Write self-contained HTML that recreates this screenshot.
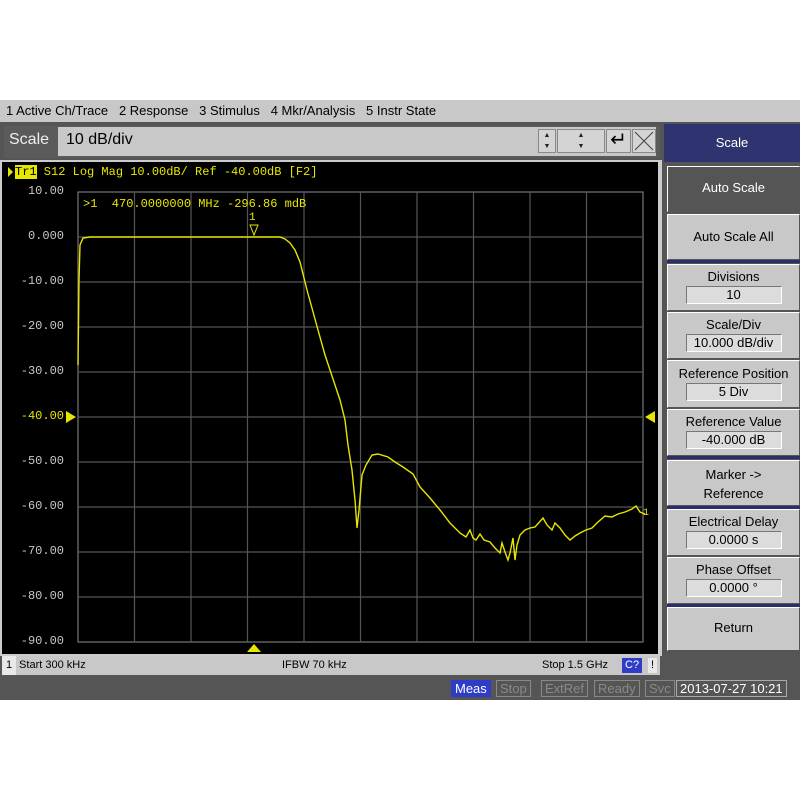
<!DOCTYPE html>
<html><head><style>
*{margin:0;padding:0;box-sizing:border-box}
body{width:800px;height:800px;background:#fff;position:relative;overflow:hidden;font-family:"Liberation Sans",sans-serif;font-size:12px}
.a{position:absolute}
.btn{position:absolute;left:667px;width:133px;background:#c8c8c8;border:1px solid #fff;border-right-color:#555;border-bottom-color:#555;color:#000;text-align:center;font-size:13px}
.val{display:block;margin:2px auto 0;width:96px;height:18px;background:#dcdcdc;border:1px solid #777;border-right-color:#fff;border-bottom-color:#fff;line-height:16px}
.sep{position:absolute;left:667px;width:133px;height:3px;background:#2a2f6a}
.lbl{position:absolute;left:0;width:64px;text-align:right;color:#c8c8c8;font-family:"Liberation Mono",monospace;font-size:12px}
.st{position:absolute;top:680px;height:17px;line-height:16px;font-size:13px;color:#8a8a8a;border:1px solid #888;padding:0 3px}
.ar{position:absolute;font-size:7px;line-height:8px;color:#222;text-align:center;width:100%}
</style></head><body>
<div class="a" style="top:100px;left:0;width:800px;height:22px;background:#c8c8c8;line-height:22px;font-size:13px;padding-left:6px">1 Active Ch/Trace&nbsp;&nbsp; 2 Response&nbsp;&nbsp; 3 Stimulus&nbsp;&nbsp; 4 Mkr/Analysis&nbsp;&nbsp; 5 Instr State</div>
<div class="a" style="top:122px;left:0;width:800px;height:578px;background:#555"></div>
<div class="a" style="top:126px;left:4px;width:656px;height:32px;background:#5a5a5a"></div>
<div class="a" style="top:131px;left:9px;font-size:16px;color:#eee">Scale</div>
<div class="a" style="top:127px;left:58px;width:598px;height:29px;background:#c8c8c8;font-size:16px;padding:4px 8px;color:#000">10 dB/div</div>
<div class="a" style="top:129px;left:538px;width:18px;height:24px;background:#d4d4d4;border:1px solid #888"><span class="ar" style="top:2px">▲</span><span class="ar" style="top:13px">▼</span></div>
<div class="a" style="top:129px;left:557px;width:48px;height:24px;background:#d4d4d4;border:1px solid #888"><span class="ar" style="top:2px">▲</span><span class="ar" style="top:13px">▼</span></div>
<div class="a" style="top:129px;left:606px;width:25px;height:24px;background:#d4d4d4;border:1px solid #888;font-size:20px;line-height:20px;text-align:center">↵</div>
<div class="a" style="top:129px;left:632px;width:24px;height:24px;background:#d4d4d4;border:1px solid #888">
<svg width="22" height="22"><path d="M2 2L20 20M20 2L2 20" stroke="#444" stroke-width="1"/></svg></div>
<div class="a" style="top:124px;left:664px;width:136px;height:38px;background:#2f3370;color:#fff;text-align:center;line-height:38px;font-size:13px">Scale</div>
<div class="a" style="top:160px;left:0;width:662px;height:496px;background:#000;border:2px solid #ccc;border-right-width:4px"></div>
<svg class="a" style="top:0;left:0" width="800" height="800">
<g stroke="#555" stroke-width="1.2" fill="none">
<rect x="78" y="192" width="565" height="450" stroke="#777"/>
<path d="M134.5 192V642M191 192V642M247.5 192V642M304 192V642M360.5 192V642M417 192V642M473.5 192V642M530 192V642M586.5 192V642"/>
<path d="M78 237H643M78 282H643M78 327H643M78 372H643M78 417H643M78 462H643M78 507H643M78 552H643M78 597H643"/>
</g>
<polyline fill="none" stroke="#e6e600" stroke-width="1.4" points="78,365 79,280 80,245 83,238 90,237 280,237 285,239 290,243 295,250 300,262 307,290 318,330 325,355 330,370 340,400 345,420 348,445 352,470 355,500 357,528 359,510 362,475 366,465 372,455 378,454 388,457 395,462 403,467 413,474 420,487 430,498 440,510 450,523 460,533 466,537 470,530 473,538 476,540 480,534 484,540 490,542 495,548 500,553 502,543 505,552 508,560 510,553 513,538 515,560 517,545 520,535 525,530 530,528 535,527 543,518 547,525 552,530 555,523 560,528 565,535 570,540 575,536 580,533 586,530 592,528 598,522 605,516 612,517 618,514 625,512 632,509 636,506 640,512 645,514"/>
<path d="M250 225H258L254 235Z" fill="none" stroke="#e6e600"/>
<path d="M66 411L76 417L66 423Z" fill="#e6e600"/>
<path d="M655 411L645 417L655 423Z" fill="#e6e600"/>
<path d="M247 652L254 644L261 652Z" fill="#e6e600"/>
<path d="M8 167L13 172L8 177Z" fill="#e6e600"/>
</svg>
<div class="a" style="top:165px;left:15px;color:#e6e600;font-family:'Liberation Mono',monospace;font-size:12px;white-space:pre"><span style="background:#e6e600;color:#000">Tr1</span> S12 Log Mag 10.00dB/ Ref -40.00dB [F2]</div>
<div class="a" style="top:197px;left:83px;color:#e6e600;font-family:'Liberation Mono',monospace;font-size:12px;white-space:pre">&gt;1  470.0000000 MHz -296.86 mdB</div>
<div class="a" style="top:212px;left:249px;color:#e6e600;font-family:'Liberation Mono',monospace;font-size:11px">1</div>
<div class="a" style="top:508px;left:643px;color:#e6e600;font-family:'Liberation Mono',monospace;font-size:10px">1</div>
<div class="lbl" style="top:184px">10.00</div>
<div class="lbl" style="top:229px">0.000</div>
<div class="lbl" style="top:274px">-10.00</div>
<div class="lbl" style="top:319px">-20.00</div>
<div class="lbl" style="top:364px">-30.00</div>
<div class="lbl" style="top:409px;color:#e6e600">-40.00</div>
<div class="lbl" style="top:454px">-50.00</div>
<div class="lbl" style="top:499px">-60.00</div>
<div class="lbl" style="top:544px">-70.00</div>
<div class="lbl" style="top:589px">-80.00</div>
<div class="lbl" style="top:634px">-90.00</div>
<div class="a" style="top:656px;left:2px;width:658px;height:19px;background:#c8c8c8;font-size:11px;line-height:19px">
<span style="display:inline-block;width:14px;background:#e8e8e8;text-align:center">1</span> Start 300 kHz
<span class="a" style="left:280px">IFBW 70 kHz</span>
<span class="a" style="left:540px">Stop 1.5 GHz</span>
<span class="a" style="left:620px;top:2px;height:15px;line-height:15px;padding:0 3px;background:#2f3cc8;color:#fff">C?</span>
<span class="a" style="left:646px;top:2px;height:15px;line-height:15px;width:9px;background:#e8e8e8;text-align:center">!</span></div>
<div class="st" style="left:451px;background:#2f3cc8;color:#fff;border-color:#2f3cc8">Meas</div>
<div class="st" style="left:496px">Stop</div>
<div class="st" style="left:541px">ExtRef</div>
<div class="st" style="left:594px">Ready</div>
<div class="st" style="left:645px">Svc</div>
<div class="st" style="left:676px;color:#fff;border-color:#aaa">2013-07-27 10:21</div>
<div class="btn" style="top:166px;height:46px;background:#555;color:#fff;line-height:42px">Auto Scale</div>
<div class="btn" style="top:214px;height:46px;line-height:44px">Auto Scale All</div>
<div class="sep" style="top:260px"></div>
<div class="btn" style="top:264px;height:47px;padding-top:4px">Divisions<span class="val">10</span></div>
<div class="btn" style="top:312px;height:47px;padding-top:4px">Scale/Div<span class="val">10.000 dB/div</span></div>
<div class="btn" style="top:360px;height:48px;padding-top:5px">Reference Position<span class="val">5 Div</span></div>
<div class="btn" style="top:409px;height:47px;padding-top:4px">Reference Value<span class="val">-40.000 dB</span></div>
<div class="sep" style="top:456px"></div>
<div class="btn" style="top:460px;height:46px;padding-top:4px;line-height:19px">Marker -&gt;<br>Reference</div>
<div class="sep" style="top:506px"></div>
<div class="btn" style="top:509px;height:47px;padding-top:4px">Electrical Delay<span class="val">0.0000 s</span></div>
<div class="btn" style="top:557px;height:47px;padding-top:4px">Phase Offset<span class="val">0.0000 °</span></div>
<div class="sep" style="top:604px"></div>
<div class="btn" style="top:607px;height:44px;line-height:40px">Return</div>
</body></html>
